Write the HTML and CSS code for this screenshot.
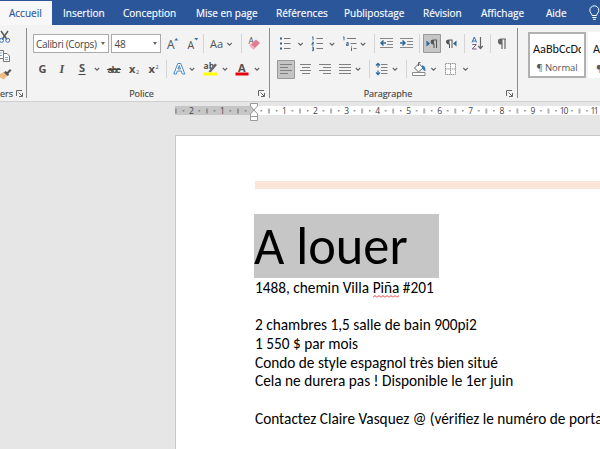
FILE: index.html
```html
<!DOCTYPE html>
<html lang="fr">
<head>
<meta charset="utf-8">
<title>A louer</title>
<link rel="stylesheet" href="styles.css">
</head>
<body>
<svg class="defs" width="0" height="0">
  <defs>
    <symbol id="chev" viewBox="0 0 8 20"><path d="M1.8 9 4 11.2 6.2 9" fill="none" stroke="#666" stroke-width="1.1"/></symbol>
  </defs>
</svg>
<nav class="tabs">
  <a class="tab active"><span>Accueil</span></a>
  <a class="tab t2">Insertion</a>
  <a class="tab t3">Conception</a>
  <a class="tab t4">Mise en page</a>
  <a class="tab t5">Références</a>
  <a class="tab t6">Publipostage</a>
  <a class="tab t7">Révision</a>
  <a class="tab t8">Affichage</a>
  <a class="tab t9">Aide</a>
  <svg class="bulb" width="12" height="16" viewBox="588 5 12 16" fill="none" stroke="#fff" stroke-width="1"><path d="M592 15.5c0-2-2.2-2.700-2.200-5.200a4.500 4.500 0 0 1 9 0c0 2.500-2.200 3.200-2.200 5.200zM592.300 17.500h4.200M593 19.300h2.800"/></svg>
</nav>
<section class="ribbon">
  <div class="group clipboard">
    <svg width="26" height="54" viewBox="0 28 26 54" fill="none">
      <path d="M1 31 7 39.500M8 31 2 39.500" stroke="#555" stroke-width="1.400"/>
      <circle cx="1.500" cy="40.300" r="2" stroke="#3b78b8"/><circle cx="7.700" cy="40.300" r="2" stroke="#3b78b8"/>
      <path d="M-2 50.500h5.500v8h-5.500M3.500 53.500h3.500l2.500 2.500v5.500h-6z" fill="#fff" stroke="#777"/><path d="M5 57.500h3M5 59.500h3M-1 53h3M-1 55.500h3" stroke="#5b89b8" stroke-width=".8"/>
      <path d="M0 74 4.500 71.500l3.500 3.500-4 4.500-4-2z" fill="#eebd83"/><path d="m4 72.500 1.500-1.500 1.500 1 3-3 1.500 1.500-3 3 .5 1.500-1.500 1z" fill="#555"/>
    </svg>
    <div class="label"><span class="name">ers</span><svg class="launcher" width="8" height="8" viewBox="0 0 8 8"><path d="M.5 6V.5H6M2.500 2.500 6 6M6.500 3v3.500H3" fill="none" stroke="#666"/></svg></div>
  </div>
  <div class="group font">
    <div class="row first">
      <div class="combo family"><span>Calibri (Corps)</span><i></i></div>
      <div class="combo size"><span>48</span><i></i></div>
      <svg width="108" height="20" viewBox="162 34 108 20">
        <g class="glyph"><text x="168" y="48.500" font-size="12">A</text><text x="188.500" y="48.500" font-size="10.500">A</text><text x="211" y="48" font-size="11" textLength="13">Aa</text><text x="249.500" y="44" font-size="8.500">A</text></g>
        <path d="m175.300 40.500 2-2.500 2 2.500zM195.300 38l2 2.500 2-2.500z" fill="#3b6ea8"/>
        <path d="M204.500 34v19M242.500 34v19" stroke="#d4d4d4"/>
        <use href="#chev" x="226.500" y="34" width="8" height="20"/>
        <path d="m250.500 45.500 6.500-6 4 3.500-6.500 6.500z" fill="#e37d93"/><path d="m250.500 45.500 4 4 1.500-1.500-4-3.800z" fill="#f2b4c0"/>
      </svg>
    </div>
    <div class="row second">
      <svg width="237" height="20" viewBox="33 59 237 20">
        <g class="glyph strong"><text x="38.500" y="72.500" font-size="11">G</text><text class="serif" x="59.500" y="72.500" font-size="12" font-style="italic">I</text><text x="79" y="72" font-size="11">S</text><text x="107.500" y="72.500" font-size="9.500" textLength="13">abc</text><text x="129" y="72.500" font-size="11">x</text><text x="148.500" y="72.500" font-size="11">x</text></g>
        <g class="glyph" font-size="5.500"><text x="136" y="74">2</text><text x="155.500" y="68.500">2</text></g>
        <path d="M78.500 74.500h7M107 69.500h14" stroke="#444"/>
        <use href="#chev" x="93" y="59" width="8" height="20"/>
        <path d="M166.500 60v18" stroke="#d4d4d4"/>
        <path d="m173.800 74 4-10.500h3l4 10.500h-2.500l-1-3h-4l-1 3zM178 69h2.500l-1.250-3.500z" fill="#fff" stroke="#4b86bd"/>
        <use href="#chev" x="188" y="59" width="8" height="20"/>
        <text class="glyph strong" x="203.500" y="69" font-size="8.500">ab</text><path d="m208.500 71.500 6.500-8 2 1.500-6.500 7.500z" fill="#666"/><path d="M203.500 72.500h13.500v3h-13.500z" fill="#ff0"/>
        <use href="#chev" x="221" y="59" width="8" height="20"/>
        <text class="glyph strong" x="238" y="71.500" font-size="11">A</text><path d="M235.500 72.500h13v3h-13z" fill="#e80011"/>
        <use href="#chev" x="253" y="59" width="8" height="20"/>
      </svg>
    </div>
    <div class="label"><span class="name">Police</span><svg class="launcher" width="8" height="8" viewBox="0 0 8 8"><path d="M.5 6V.5H6M2.500 2.500 6 6M6.500 3v3.500H3" fill="none" stroke="#666"/></svg></div>
  </div>
  <div class="group para">
    <div class="row first">
      <svg width="247" height="20" viewBox="270 34 247 20">
        <path d="M284 38.500h6.500M284 43.500h6.500M284 48.500h6.500M316.500 38.500h6.500M316.500 43.500h6.500M316.500 48.500h6.500M347 38.500h9M350.500 43.500h6M353.500 48.500h3" stroke="#777"/>
        <path d="M280 37.500h2v2h-2zM280 42.500h2v2h-2zM280 47.500h2v2h-2z" fill="#345f91"/>
        <path d="M312 37.500l1-.8v3.600M312 42.200h1.500v1.300H312v1.500h1.700M312 47.200h1.500v3.500H312M312 49h1.500M343 37.500l1-.8v3.600M346.500 42.500h1.700v3h-1.700v-1.600h1.700M351.500 47.500v3.500M351.500 45.800v.8" fill="none" stroke="#345f91" stroke-width=".9"/>
        <use href="#chev" x="296.500" y="34" width="8" height="20"/><use href="#chev" x="328" y="34" width="8" height="20"/><use href="#chev" x="359" y="34" width="8" height="20"/>
        <path d="M374.500 34v19M419.500 34v19M464.500 34v19M490.500 34v19" stroke="#d4d4d4"/>
        <path d="M380 38.500h13M387 41.500h6M387 44.500h6M380 47.500h13M400 38.500h13M407 41.500h6M407 44.500h6M400 47.500h13" stroke="#888"/>
        <path d="M386 43H381m2.500-2.500L381 43l2.500 2.500M400 43h5m-2.500-2.500L405 43l-2.500 2.500" fill="none" stroke="#2f6797" stroke-width="1.500"/>
        <path d="M423.500 34.500h17v18h-17z" fill="#c5c5c5" stroke="#999"/>
        <path d="m426.500 40.500 3.500 3-3.500 3zM456.500 40.500l-3.500 3 3.500 3z" fill="#2f6797"/>
        <g id="pil"><path d="M437 40h-4a2 2 0 0 0 0 4h1v4M436.500 40v8" fill="none" stroke="#555"/><path d="M431 40h3v4h-1a2 2 0 0 1-2-2z" fill="#555"/></g>
        <use href="#pil" x="15.500"/>
        <path d="M506 39h-5a2.500 2.500 0 0 0 0 5h1v5M505 39v10" fill="none" stroke="#666" stroke-width="1.200"/><path d="M499 39h3.500v5H501a2.500 2.500 0 0 1-2.500-2.500z" fill="#666"/>
        <path d="m472 42.500 2.300-5.500 2.300 5.500M472.800 41h3" fill="none" stroke="#3b6ea8"/><path d="M472.300 44.500h4l-4 4.500h4.300" fill="none" stroke="#7b5688"/>
        <path d="M480.500 37v11.500m-2.300-2.500 2.300 2.500 2.300-2.500" fill="none" stroke="#666" stroke-width="1.200"/>
      </svg>
    </div>
    <div class="row second">
      <svg width="247" height="20" viewBox="270 59 247 20">
        <path d="M277.500 60.500h17v18h-17z" fill="#c5c5c5" stroke="#999"/>
        <path d="M280 64.500h12M280 67.500h8M280 70.500h12M280 73.500h8M300 64.500h11M302 67.500h8M300 70.500h11M302 73.500h8M319 64.500h12M323 67.500h8M319 70.500h12M323 73.500h8M339 64.500h12M339 67.500h12M339 70.500h12M339 73.500h12M381 64.500h6.500M381 67.500h6.500M381 70.500h6.500M381 73.500h6.500" stroke="#808080"/>
        <use href="#chev" x="354" y="59" width="8" height="20"/><use href="#chev" x="391" y="59" width="8" height="20"/><use href="#chev" x="429.500" y="59" width="8" height="20"/><use href="#chev" x="461.500" y="59" width="8" height="20"/>
        <path d="M369.500 60v18M406.500 60v18" stroke="#d4d4d4"/>
        <path d="M378 63.500v4M378 70.500v4M376 65.500l2-2.200 2 2.200M376 72.500l2 2.200 2-2.200" fill="none" stroke="#2f6797" stroke-width="1.200"/>
        <path d="m414.500 68 4.500-4.500 4 4.500-4.500 4zM418.500 66v-3.500h2" fill="#fff" stroke="#666"/><path d="M422 65.500c2.500 0 3.500 1.500 3.500 5.500-2 0-2.500-2-3.500-3z" fill="#3b78b8"/><path d="M412.500 72.500h12.500v3h-12.500z" fill="#fff" stroke="#888"/>
        <path d="M445.500 63.500h10v11h-10zM450.500 63.500v11M445.500 69h10" fill="#fff" stroke="#999" stroke-dasharray="1.500 .5"/>
      </svg>
    </div>
    <div class="label"><span class="name">Paragraphe</span><svg class="launcher" width="8" height="8" viewBox="0 0 8 8"><path d="M.5 6V.5H6M2.500 2.500 6 6M6.500 3v3.500H3" fill="none" stroke="#666"/></svg></div>
  </div>
  <div class="group styles">
    <div class="style selected"><b>AaBbCcDc</b><small>¶ Normal</small></div>
    <div class="style"><b>AaBbCcDc</b><small>¶ Sans int</small></div>
  </div>
</section>
<main class="workspace">
  <div class="ruler">
    <svg width="425" height="18" viewBox="175 102 425 18">
      <defs><pattern id="ticks" x="253.500" y="102" width="31.050" height="18" patternUnits="userSpaceOnUse"><path d="M7.300 8h1.200v1.500H7.300zM22.500 8h1.200v1.500h-1.200zM15 6.500h1v5h-1z" fill="#666"/></pattern></defs>
      <path d="M175 106h79v9h-79z" fill="#c6c6c6"/><path d="M254 106h346v9H254z" fill="#fff"/>
      <path d="M175 102h425v18H175z" fill="url(#ticks)"/>
      <g class="nums"><text x="191.500" y="113.700">2</text><text x="222.500" y="113.700">1</text><text x="284.500" y="113.700">1</text><text x="315.500" y="113.700">2</text><text x="346.700" y="113.700">3</text><text x="377.700" y="113.700">4</text><text x="408.800" y="113.700">5</text><text x="439.800" y="113.700">6</text><text x="470.800" y="113.700">7</text><text x="501.900" y="113.700">8</text><text x="533" y="113.700">9</text><text x="564" y="113.700" textLength="8.500">10</text><text x="594.500" y="113.700" textLength="8">11</text></g>
      <path d="M250.500 103.500h7v2.500l-3.500 4-3.500-4zM254 110l3.500 4v2.500h-7V114zM250.500 116.500h7v4h-7z" fill="#fff" stroke="#999"/>
    </svg>
  </div>
  <article class="page">
    <div class="stripe"></div>
    <h1><span>A louer</span></h1>
    <p>1488, chemin Villa <u>Piña</u> #201</p>
    <p>&nbsp;</p>
    <p>2 chambres 1,5 salle de bain 900pi2</p>
    <p>1 550 $ par mois</p>
    <p>Condo de style espagnol très bien situé</p>
    <p>Cela ne durera pas ! Disponible le 1er juin</p>
    <p>&nbsp;</p>
    <p>Contactez Claire Vasquez @ (vérifiez le numéro de portable)</p>
  </article>
</main>
</body>
</html>
```
FILE: styles.css
```css
* { box-sizing: border-box; }
body { margin: 0; width: 600px; height: 449px; overflow: hidden; background: #e6e6e6; font-family: "Open Sans", "Noto Sans", sans-serif; color: #444; display: flex; flex-direction: column; }
.defs { display: none; }
.tabs { display: flex; flex: none; height: 25px; background: #2b579a; color: #fff; font-size: 10px; line-height: 26px; white-space: nowrap; }
.tab { flex: none; -webkit-text-stroke: .15px currentColor; }
.tab.active { width: 52px; margin-top: 1px; line-height: 24px; background: #f8f8f8; color: #2b579a; padding-left: 9px; }
.t2 { width: 60px; padding-left: 11px; }
.t3 { width: 73px; padding-left: 11px; }
.t4 { width: 80px; padding-left: 11px; }
.t5 { width: 68px; padding-left: 11px; }
.t6 { width: 79px; padding-left: 11px; }
.t7 { width: 58px; padding-left: 11px; }
.t8 { width: 65px; padding-left: 11px; }
.t9 { width: 53px; padding-left: 11px; }
.bulb { margin-top: 5px; flex: none; }
.ribbon { display: flex; flex: none; height: 77px; padding-top: 3px; background: #f3f3f3; border-bottom: 1px solid #d0d0d0; }
.group { position: relative; flex: none; height: 70px; display: flex; flex-direction: column; border-right: 1px solid #8c8c8c; }
.group svg { display: block; flex: none; }
.clipboard { width: 27px; }
.font { width: 243px; padding-left: 6px; }
.para { width: 248px; }
.styles { width: 82px; padding: 4px 0 0 10px; flex-direction: row; gap: 2px; border: 0; overflow: hidden; }
.row { display: flex; height: 20px; }
.first { margin-top: 6px; }
.second { margin-top: 5px; }
.combo { display: flex; align-items: center; justify-content: space-between; height: 19px; border: 1px solid #ababab; background: #fff; font-size: 10px; padding: 0 3px 0 2px; white-space: nowrap; }
.combo i { border: 2px solid transparent; border-top: 3px solid #666; border-bottom: 0; }
.family { width: 77px; margin-right: 2px; letter-spacing: -.32px; }
.size { width: 50px; }
.glyph { fill: #505050; font-family: "Open Sans", sans-serif; }
.strong { font-weight: 700; }
.serif { font-family: "Liberation Serif", serif; }
.label { display: flex; align-items: center; justify-content: center; margin-top: auto; height: 14px; margin-bottom: -3px; font-size: 9px; line-height: 14px; padding-right: 3px; }
.clipboard .label { justify-content: space-between; padding-right: 2px; }
.label .name { -webkit-text-stroke: .15px #444; }
.font .name, .para .name { margin: 0 auto; }
.font .name { transform: translateX(-4px); }
.style { flex: none; width: 58px; height: 46px; background: #fff; overflow: hidden; white-space: nowrap; padding: 8px 4px 0 5px; display: flex; flex-direction: column; }
.style.selected { border: 2px solid #b1b1b1; padding: 6px 3px 0; }
.style b { font: 11px/17px Carlito, Lato, sans-serif; font-size: 12.2px; color: #111; overflow: hidden; }
.style small { font-size: 9.5px; line-height: 16px; margin-top: 4px; text-align: center; color: #555; letter-spacing: -.1px; }
.workspace { flex: 1; display: flex; flex-direction: column; }
.ruler { height: 18px; padding-left: 175px; }
.ruler svg { display: block; overflow: visible; }
.nums { font-size: 8.5px; text-anchor: middle; fill: #444; }
.page { flex: 1; margin: 16px 0 0 176px; background: #fff; outline: 1px solid #c9c9c9; padding: 45px 0 0 79px; color: #000; font-family: Carlito, Calibri, Lato, sans-serif; white-space: nowrap; overflow: hidden; }
.stripe { height: 8px; background: #fbe4d8; margin-bottom: 25px; }
h1 { margin: 0 0 1px -1px; width: 185px; height: 64px; background: #c6c6c6; font-weight: 400; font-size: 52.4px; line-height: 64px; padding-left: 0; }
p { margin: 0; font-size: 15.3px; line-height: 18.700px; height: 18.700px; }
u { text-decoration: none; padding-bottom: 1px; background: url("data:image/svg+xml,%3Csvg xmlns='http://www.w3.org/2000/svg' width='4' height='3'%3E%3Cpath d='M0 2.500 2 .5 4 2.500' fill='none' stroke='%23e03030' stroke-width='1'/%3E%3C/svg%3E") repeat-x 0 100%; }
```
